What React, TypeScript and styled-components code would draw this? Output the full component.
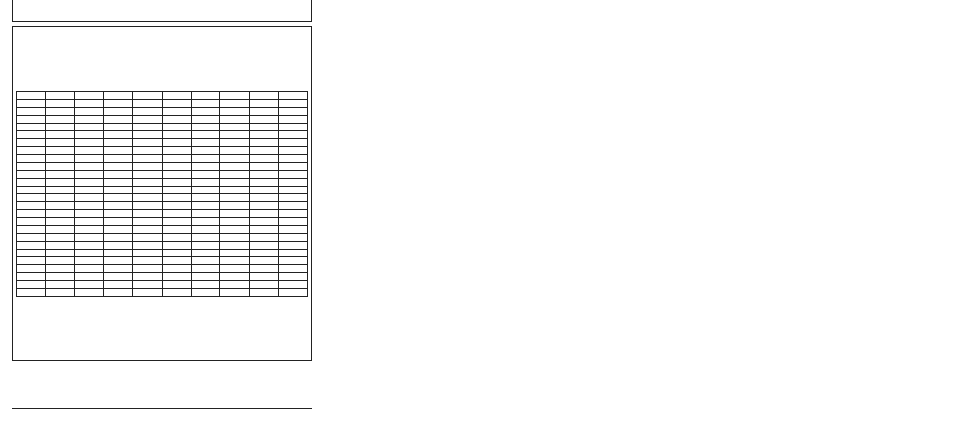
import styled, { createGlobalStyle } from "styled-components";

const GlobalStyle = createGlobalStyle`
  html, body {
    margin: 0;
    padding: 0;
    background: #ffffff;
    font-family: "Liberation Sans", Arial, sans-serif;
  }
`;

const Page = styled.div`
  width: 300px;
  padding-left: 12px;
  display: flex;
  flex-direction: column;
`;

const TopBox = styled.div`
  height: 22px;
  box-sizing: border-box;
  border: 1px solid #222;
  border-top: none;
`;

const Panel = styled.div`
  margin-top: 4px;
  height: 335px;
  box-sizing: border-box;
  border: 1px solid #222;
  padding: 64px 3px 0 3px;
`;

const Grid = styled.table`
  width: 291px;
  table-layout: fixed;
  border-collapse: collapse;
  border-spacing: 0;

  td {
    border: 1px solid #222;
    padding: 0;
    font-size: 0;
    line-height: 0;
  }
`;

const Col = styled.col<{ $w: number }>`
  width: ${(p) => p.$w}px;
`;

const Row = styled.tr`
  height: 7.885px;
`;

const Rule = styled.div`
  margin-top: 47px;
  height: 1px;
  background: #222;
`;

const ROWS = 26;
// column widths read off the reference grid lines
const COL_WIDTHS = [29, 29, 29, 29, 30, 29, 28, 30, 29, 29];

export default function App() {
  return (
    <>
      <GlobalStyle />
      <Page>
        <TopBox />
        <Panel>
          <Grid>
            <colgroup>
              {COL_WIDTHS.map((w, i) => (
                <Col key={i} $w={w} />
              ))}
            </colgroup>
            <tbody>
              {Array.from({ length: ROWS }).map((_, r) => (
                <Row key={r}>
                  {COL_WIDTHS.map((_, c) => (
                    <td key={c} />
                  ))}
                </Row>
              ))}
            </tbody>
          </Grid>
        </Panel>
        <Rule />
      </Page>
    </>
  );
}
